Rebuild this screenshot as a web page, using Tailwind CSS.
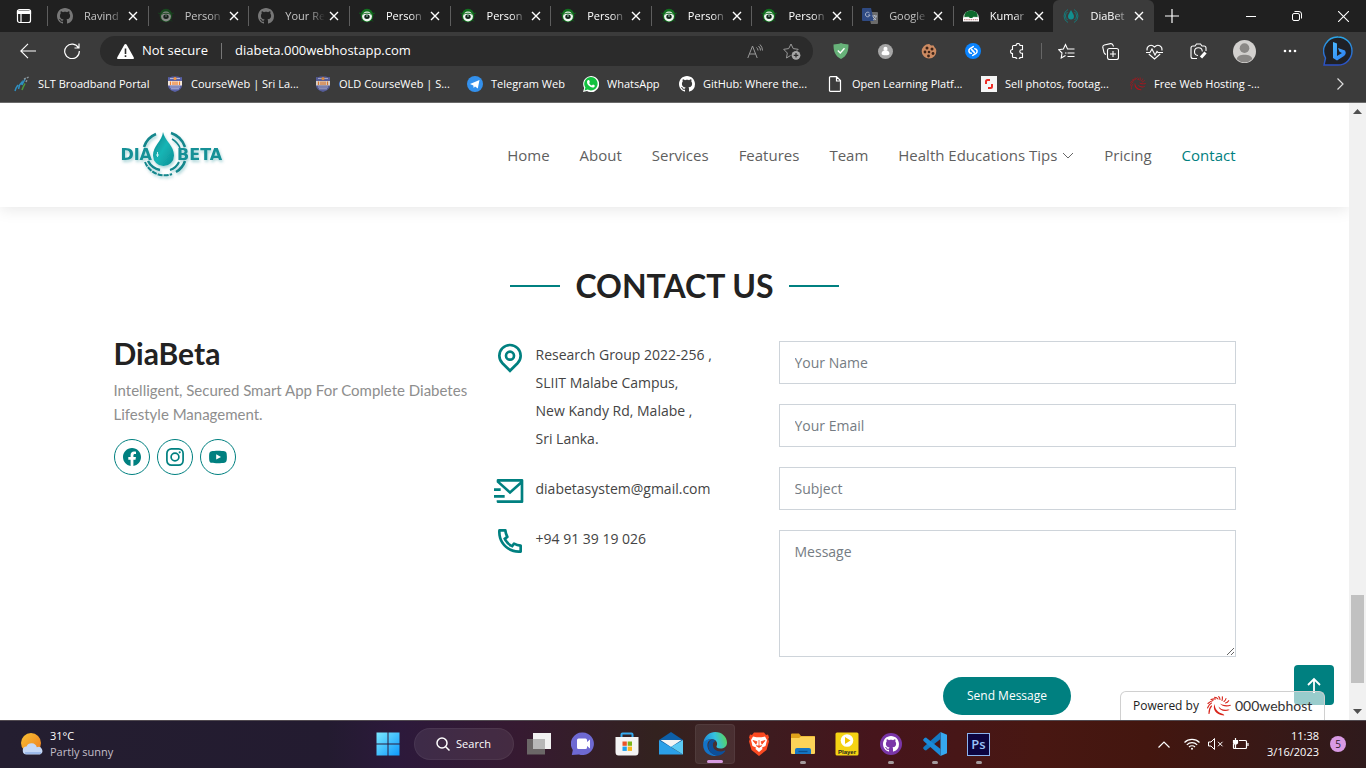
<!DOCTYPE html>
<html lang="en">
<head>
<meta charset="utf-8">
<meta name="viewport" content="width=device-width, initial-scale=1">
<title>DiaBeta</title>
<script src="https://cdn.jsdelivr.net/npm/@tailwindcss/browser@4"></script>
</head>
<body class="flex h-screen flex-col overflow-hidden bg-white font-['Open_Sans',sans-serif]">

<svg class="hidden" aria-hidden="true">
  <symbol id="github" viewBox="0 0 16 16"><path fill="currentColor" d="M8 0C3.58 0 0 3.58 0 8c0 3.54 2.29 6.53 5.47 7.59.4.07.55-.17.55-.38 0-.19-.01-.82-.01-1.49-2.01.37-2.53-.49-2.69-.94-.09-.23-.48-.94-.82-1.13-.28-.15-.68-.52-.01-.53.63-.01 1.08.58 1.23.82.72 1.21 1.87.87 2.33.66.07-.52.28-.87.51-1.07-1.78-.2-3.64-.89-3.64-3.95 0-.87.31-1.59.82-2.15-.08-.2-.36-1.02.08-2.12 0 0 .67-.21 2.2.82.64-.18 1.32-.27 2-.27s1.36.09 2 .27c1.53-1.04 2.2-.82 2.2-.82.44 1.1.16 1.92.08 2.12.51.56.82 1.27.82 2.15 0 3.07-1.87 3.75-3.65 3.95.29.25.54.73.54 1.48 0 1.07-.01 1.93-.01 2.2 0 .21.15.46.55.38A8.01 8.01 0 0 0 16 8c0-4.42-3.58-8-8-8"/></symbol>
  <symbol id="close" viewBox="0 0 10 10"><path d="M1 1l8 8M9 1L1 9" stroke="currentColor" stroke-width="1.400" fill="none"/></symbol>
  <symbol id="person" viewBox="0 0 16 16"><ellipse cx="8" cy="7.500" rx="6.300" ry="6.800" fill="#12701f"/><path d="M0 5l3 1M16 5l-3 1M2 13.500l2-2M14 13.500l-2-2" stroke="#0f5a1a"/><circle cx="8" cy="8.500" r="4.900" fill="#f2f7f2"/><ellipse cx="8" cy="8.700" rx="2.700" ry="2.200" fill="#12251a"/><path d="M3.500 6.300C6 4.800 10 4.800 12.500 6.300" stroke="#12701f" fill="none"/><circle cx="8" cy="8" r=".700" fill="#cfe"/></symbol>
  <symbol id="sliit" viewBox="0 0 14 16"><path d="M0 1c2 .5 3 0 4-.6h6C11 1 12 1.500 14 1v8c0 4-4 6-7 7-3-1-7-3-7-7z" fill="#5a62a8"/><path d="M2 2.500h10M2 11h10M3 12.800h8" stroke="#c9cbe6" stroke-width=".8"/><circle cx="7" cy="2.600" r="1.600" fill="#f0923c"/><path d="M0 5h14v4.500H0z" fill="#f4e9de"/><path d="M2.500 5.500v3.500M5 5.500v3.500M7 5.500v3.500M9 5.500v3.500M11.500 5.500v3.500" stroke="#ee7d2b" stroke-width="1.200"/></symbol>
  <symbol id="swirl" viewBox="0 0 24 20"><g fill="currentColor"><path d="M7.500 8C5.500 13 8 18.500 17 19.500 17.500 19 17 18.500 16 18 10.500 16.500 8 13 7.500 8z"/><path d="M11.500 10.500c1 4 6 6 11 3.500-.2-.5-1-.600-2-.400-4 .800-7-.600-9-3.100z"/><path d="M13 7.500c2 3 7 4 11 2 0-.6-.5-.7-1.500-.600-4 .700-7-.100-9.500-1.400z"/></g><g fill="none" stroke="currentColor" stroke-width="1.100" stroke-linecap="round"><path d="M4.500 10C2.500 12 2 14 2 17.500M4.500 7C2.500 8 1.500 9.500.500 12M6 4.500C4 5 2.500 6 1 7.500M8.500 3C7 2.500 5.500 3 4 3.500M11 3C10 1.500 9 1.200 7.500 1.200M13 3.500c0-1.200-.5-2-1.300-2.800M15 4.500c.5-1.500.5-2.500.3-3.800M17 5.500c1.200-1 1.800-2 2-3M18.500 7c1.500-.3 2.500-1.200 3.200-2.300"/></g></symbol>
</svg>

<!-- Tab strip -->
<div class="flex h-8 shrink-0 bg-[#202020] text-[11px] text-white">
  <button aria-label="Tab actions" class="flex w-[47px] items-center justify-center">
    <svg class="size-4" viewBox="0 0 16 16" fill="none" stroke="#fff" stroke-width="1.200"><rect x="1.500" y="1.500" width="13" height="13" rx="2"/><path d="M1.500 3h13v2.500h-13z" fill="#fff"/><path d="M5 5v9.500"/></svg>
  </button>
  <div class="flex min-w-0 flex-1" id="tabs">
    <div class="flex min-w-0 flex-1 items-center pl-[10px] relative"><i class="absolute left-0 h-5 w-px bg-[#5e5e5e]"></i><svg class="size-4 shrink-0 text-[#777]"><use href="#github"/></svg><span class="ml-[11px] w-10 whitespace-nowrap text-[#c5c5c5] [mask-image:linear-gradient(to_right,black_60%,transparent)]">Ravind</span><button aria-label="Close tab" class="ml-1"><svg class="size-[10px]"><use href="#close"/></svg></button></div>
    <div class="flex min-w-0 flex-1 items-center pl-[10px] relative"><i class="absolute left-0 h-5 w-px bg-[#5e5e5e]"></i><svg class="size-4 shrink-0 opacity-50"><use href="#person"/></svg><span class="ml-[11px] w-10 whitespace-nowrap text-[#c5c5c5] [mask-image:linear-gradient(to_right,black_60%,transparent)]">Person</span><button aria-label="Close tab" class="ml-1"><svg class="size-[10px]"><use href="#close"/></svg></button></div>
    <div class="flex min-w-0 flex-1 items-center pl-[10px] relative"><i class="absolute left-0 h-5 w-px bg-[#5e5e5e]"></i><svg class="size-4 shrink-0 text-[#777]"><use href="#github"/></svg><span class="ml-[11px] w-10 whitespace-nowrap text-[#c5c5c5] [mask-image:linear-gradient(to_right,black_60%,transparent)]">Your Re</span><button aria-label="Close tab" class="ml-1"><svg class="size-[10px]"><use href="#close"/></svg></button></div>
    <div class="flex min-w-0 flex-1 items-center pl-[10px] relative"><i class="absolute left-0 h-5 w-px bg-[#5e5e5e]"></i><svg class="size-4 shrink-0"><use href="#person"/></svg><span class="ml-[11px] w-10 whitespace-nowrap [mask-image:linear-gradient(to_right,black_60%,transparent)]">Person</span><button aria-label="Close tab" class="ml-1"><svg class="size-[10px]"><use href="#close"/></svg></button></div>
    <div class="flex min-w-0 flex-1 items-center pl-[10px] relative"><i class="absolute left-0 h-5 w-px bg-[#5e5e5e]"></i><svg class="size-4 shrink-0"><use href="#person"/></svg><span class="ml-[11px] w-10 whitespace-nowrap [mask-image:linear-gradient(to_right,black_60%,transparent)]">Person</span><button aria-label="Close tab" class="ml-1"><svg class="size-[10px]"><use href="#close"/></svg></button></div>
    <div class="flex min-w-0 flex-1 items-center pl-[10px] relative"><i class="absolute left-0 h-5 w-px bg-[#5e5e5e]"></i><svg class="size-4 shrink-0"><use href="#person"/></svg><span class="ml-[11px] w-10 whitespace-nowrap [mask-image:linear-gradient(to_right,black_60%,transparent)]">Person</span><button aria-label="Close tab" class="ml-1"><svg class="size-[10px]"><use href="#close"/></svg></button></div>
    <div class="flex min-w-0 flex-1 items-center pl-[10px] relative"><i class="absolute left-0 h-5 w-px bg-[#5e5e5e]"></i><svg class="size-4 shrink-0"><use href="#person"/></svg><span class="ml-[11px] w-10 whitespace-nowrap [mask-image:linear-gradient(to_right,black_60%,transparent)]">Person</span><button aria-label="Close tab" class="ml-1"><svg class="size-[10px]"><use href="#close"/></svg></button></div>
    <div class="flex min-w-0 flex-1 items-center pl-[10px] relative"><i class="absolute left-0 h-5 w-px bg-[#5e5e5e]"></i><svg class="size-4 shrink-0"><use href="#person"/></svg><span class="ml-[11px] w-10 whitespace-nowrap [mask-image:linear-gradient(to_right,black_60%,transparent)]">Person</span><button aria-label="Close tab" class="ml-1"><svg class="size-[10px]"><use href="#close"/></svg></button></div>
    <div class="flex min-w-0 flex-1 items-center pl-[10px] relative"><i class="absolute left-0 h-5 w-px bg-[#5e5e5e]"></i><svg class="size-4 shrink-0" viewBox="0 0 16 16"><path d="M6 4h9q1 0 1 1v10q0 1-1 1H9z" fill="#6b6b6b"/><path d="M1 0h8l3 13H1q-1 0-1-1V1q0-1 1-1z" fill="#2f4a82"/><path d="M7.500 5A2.300 2.300 0 1 0 8 7H6M10 8h5M12.500 7v1M11 12c2-1 3-2 3-4M11 9l3 3" stroke="#b5bed0" fill="none" stroke-width=".9"/></svg><span class="ml-[11px] w-10 whitespace-nowrap text-[#c5c5c5] [mask-image:linear-gradient(to_right,black_60%,transparent)]">Google</span><button aria-label="Close tab" class="ml-1"><svg class="size-[10px]"><use href="#close"/></svg></button></div>
    <div class="flex min-w-0 flex-1 items-center pl-[10px] relative"><i class="absolute left-0 h-5 w-px bg-[#5e5e5e]"></i><svg class="size-4 shrink-0" viewBox="0 0 16 16"><path d="M0 10a8 7.500 0 0 1 16 0z" fill="#e9f0e9"/><path d="M1.500 9C1 6 3 3.500 5 3.200 6 2.300 10 2.300 11 3.200 13.500 3.500 15 6 14.500 9l-4-.3-1.500 1.300h-2L5.500 8.700z" fill="#0d6a2c"/><path d="M0 10h16v3.500H0z" fill="#fff"/><path d="M1 11.700h14" stroke="#b77" stroke-dasharray="1.500 .7"/></svg><span class="ml-[11px] w-10 whitespace-nowrap [mask-image:linear-gradient(to_right,black_60%,transparent)]">Kumar</span><button aria-label="Close tab" class="ml-1"><svg class="size-[10px]"><use href="#close"/></svg></button></div>
    <div class="flex min-w-0 flex-1 items-center rounded-t-md bg-[#3b3b3b] pl-[10px]"><svg class="size-4 shrink-0" viewBox="0 0 16 16" fill="none" stroke="#147b7b"><path d="M8 2c1.500 3 3 4.500 3 6.500a3 3 0 0 1-6 0C5 6.500 6.500 5 8 2z" fill="#128f8f" stroke="none"/><path d="M5 1.500a7.300 7.300 0 0 0 0 13M11 1.500a7.300 7.300 0 0 1 0 13M4.500 4a5 5 0 0 0 0 8M11.500 4a5 5 0 0 1 0 8"/></svg><span class="ml-[11px] w-10 whitespace-nowrap [mask-image:linear-gradient(to_right,black_60%,transparent)]">DiaBet</span><button aria-label="Close tab" class="ml-1"><svg class="size-[10px]"><use href="#close"/></svg></button></div>
  </div>
  <div class="flex w-[212px] shrink-0 items-center">
    <button aria-label="New tab" class="flex w-9 justify-center"><svg class="size-[14px]" viewBox="0 0 14 14" stroke="#fff" stroke-width="1.200"><path d="M7 0v14M0 7h14"/></svg></button>
    <div class="ml-auto flex">
      <button aria-label="Minimize" class="flex w-[46px] justify-center"><svg class="size-[10px]" viewBox="0 0 10 10" stroke="#fff"><path d="M0 5.500h10"/></svg></button>
      <button aria-label="Restore" class="flex w-[46px] justify-center"><svg class="size-[10px]" viewBox="0 0 10 10" stroke="#fff" fill="none"><rect x=".5" y="2.500" width="7" height="7" rx="1.500"/><path d="M2.500.5H7A2.500 2.500 0 0 1 9.500 3v4.500"/></svg></button>
      <button aria-label="Close window" class="flex w-[46px] justify-center"><svg class="size-[11px]" viewBox="0 0 10 10" stroke="#fff"><path d="M0 0l10 10M10 0L0 10"/></svg></button>
    </div>
  </div>
</div>

<!-- Toolbar -->
<div class="flex h-[38px] shrink-0 items-center bg-[#3b3b3b] pr-0.5 pl-1.5 text-white">
  <button aria-label="Back" class="flex w-11 justify-center"><svg class="size-4" viewBox="0 0 16 16" fill="none" stroke="#fff" stroke-width="1.100"><path d="M16 8H.800M8 .800L.800 8 8 15.200"/></svg></button>
  <button aria-label="Refresh" class="mr-1.5 flex w-11 justify-center"><svg class="size-4" viewBox="0 0 16 16" fill="none" stroke="#fff" stroke-width="1.200"><path d="M14.500 5A7.300 7.300 0 1 0 15.300 8M15 .500V5h-4.500"/></svg></button>
  <div class="flex h-[30px] min-w-0 flex-1 items-center rounded-full bg-[#2b2b2b] pr-3 pl-[17px] text-[13px]">
    <svg class="h-[15px] w-[17px] shrink-0" viewBox="0 0 17 15"><path d="M8.500 0q.8 0 1.200.8l7 12.500Q17.300 15 15.800 15H1.200Q-.3 15 .3 13.300L7.300.8Q7.700 0 8.500 0z" fill="#fff"/><path d="M8.500 4.500V10M8.500 11.300v1.800" stroke="#2b2b2b" stroke-width="1.600"/></svg>
    <span class="ml-2 w-[79px] whitespace-nowrap">Not secure</span>
    <i class="h-4 w-px bg-[#777]"></i>
    <input aria-label="Address" value="diabeta.000webhostapp.com" class="ml-[13px] min-w-0 flex-1 bg-transparent outline-none">
    <button aria-label="Read aloud" class="mr-5"><svg class="h-[15px] w-4" viewBox="0 0 16 15" fill="none" stroke="#9a9a9a"><path d="M.800 14L5.500 2 10.200 14M2.500 10h6M9.500 3.500a4 4 0 0 1 1.500 3M11.500 2a6 6 0 0 1 2 4.500M13 .500a9 9 0 0 1 2.500 6"/></svg></button>
    <button aria-label="Add to favorites"><svg class="h-[17px] w-[18px]" viewBox="0 0 18 17" fill="none" stroke="#9a9a9a"><path d="M8 1l2.200 4.600 5 .7-1.500 1.500M7.500 12.500L3.500 15l.8-5L.7 6.300l5-.7L8 1"/><circle cx="13" cy="12.300" r="4.400" fill="#a5a5a5" stroke="none"/><path d="M13 10v4.600M10.700 12.300h4.600" stroke="#2b2b2b" stroke-width="1.200"/></svg></button>
  </div>
  <button aria-label="Ad blocker" class="ml-1.5 flex w-11 justify-center"><svg class="size-4" viewBox="0 0 16 16"><path d="M8 0c2.500 1 5 1.300 7.500 1.500C15.600 8 14 13 8 16 2 13 .4 8 .5 1.500 3 1.300 5.500 1 8 0z" fill="#67b279"/><path d="M4.800 7.500l2.500 2.500 4.200-4.700" fill="none" stroke="#fff" stroke-width="1.400"/></svg></button>
  <button aria-label="Extension" class="flex w-11 justify-center"><svg class="size-[15px]" viewBox="0 0 16 16"><circle cx="8" cy="8" r="8" fill="#a6a6a6"/><circle cx="8" cy="5.200" r="2.200" fill="#fff"/><path d="M6.500 7h3c2 .500 2.700 2 2.700 3.500S10 12 8 12s-4.200 0-4.200-1.500S4.500 7.500 6.500 7z" fill="#fff"/></svg></button>
  <button aria-label="Cookies" class="flex w-11 justify-center"><svg class="size-4" viewBox="0 0 16 16"><path d="M8 1c1 0 1 1.500 2.500 1.500C11.500 2.500 12 1.500 13 3c0 1.500 2.500 2 2.300 5A7.300 7.300 0 1 1 8 1z" fill="#cd8b62"/><g fill="#3d2418"><circle cx="6" cy="5" r="1.500"/><circle cx="11" cy="6" r="1.500"/><circle cx="4" cy="9" r="1.400"/><circle cx="8" cy="9" r="1.300"/><circle cx="12" cy="10.500" r="1.400"/><circle cx="7.500" cy="13" r="1.400"/></g></svg></button>
  <button aria-label="Shazam" class="flex w-11 justify-center"><svg class="size-4" viewBox="0 0 16 16"><circle cx="8" cy="8" r="8" fill="#0a84ff"/><path d="M6.300 10.300C3.800 10 3 7.200 5 5.700L8.300 3.600M7 7.300l2.300 2.200M9.700 5.700c2.500.3 3.300 3.100 1.300 4.600l-3.300 2.100M9 8.700L6.700 6.500" fill="none" stroke="#fff" stroke-width="1.500" stroke-linecap="round"/></svg></button>
  <button aria-label="Extensions" class="flex w-11 justify-center"><svg class="size-4" viewBox="0 0 16 16" fill="none" stroke="#fff" stroke-width="1.100"><path d="M5 2.500h2a2 2 0 0 1 4 0h2.500v4.300h-1a1.700 1.700 0 0 0 0 3.400h1v4.300H11a2 2 0 0 1-4 0H4.500q-1 0-1-1V10.500a2 2 0 0 1 0-4V3.500q0-1 1-1z"/></svg></button>
  <i class="mx-0.5 h-4 w-px bg-[#666]"></i>
  <button aria-label="Favorites" class="flex w-11 justify-center"><svg class="size-[17px]" viewBox="0 0 17 17" fill="none" stroke="#fff" stroke-width="1.100"><path d="M11 6H9.500L7.500 1.500 5.400 6 .700 6.600 4 10l-.8 5L7.500 12.500M8.500 10H7M10 6h6.500M9.500 10h7M9.500 13.500h7"/></svg></button>
  <button aria-label="Collections" class="flex w-11 justify-center"><svg class="size-[17px]" viewBox="0 0 17 17" fill="none" stroke="#fff" stroke-width="1.100"><rect x="5.500" y="5.500" width="11" height="11" rx="2"/><path d="M11 8v6M8 11h6M4 11.500Q2.500 11 2 9.500L.800 4.500Q.500 2.500 2.300 2L8.500.600q1.800-.2 2.300 1.200L11.500 3.500"/></svg></button>
  <button aria-label="Performance" class="flex w-11 justify-center"><svg class="size-[17px]" viewBox="0 0 17 17" fill="none" stroke="#fff" stroke-width="1.100"><path d="M1 7.500C.5 3 5 .500 8.500 4 12 .500 16.500 3 16 7.500M2.800 11l5.700 5 5.700-5M0 9.500h4l2-3.500 3 6 2-3.500 1 1h5"/></svg></button>
  <button aria-label="Screenshot" class="flex w-11 justify-center"><svg class="size-[17px]" viewBox="0 0 17 17" fill="none" stroke="#fff" stroke-width="1.100"><path d="M7 15.500H3q-2 0-2-2V5q0-2 2-2h2l1.500-2h4L12 3h2q2 0 2 2v3M8 12.500A3.900 3.900 0 1 1 12.300 8.500"/><path d="M15.500 9.500l-4.500 5" stroke-width="3"/></svg></button>
  <button aria-label="Profile" class="flex w-12 justify-center"><svg class="size-[23px]" viewBox="0 0 24 24"><circle cx="12" cy="12" r="12" fill="#d2d0ce"/><circle cx="12" cy="8.500" r="5" fill="#8a8886"/><path d="M4 20c0-6 16-6 16 0a11.500 11.500 0 0 1-16 0z" fill="#8a8886"/></svg></button>
  <button aria-label="Settings and more" class="flex w-11 justify-center"><svg class="h-1 w-[14px]" viewBox="0 0 14 4" fill="#fff"><circle cx="2" cy="2" r="1.300"/><circle cx="7" cy="2" r="1.300"/><circle cx="12" cy="2" r="1.300"/></svg></button>
  <button aria-label="Bing" class="flex w-[52px] justify-center"><svg class="size-[30px]" viewBox="0 0 30 30"><defs><linearGradient id="bg" x1="0" y1="0" x2="0" y2="1"><stop stop-color="#2aa6e8"/><stop offset="1" stop-color="#2b4fc4"/></linearGradient><linearGradient id="bb" x1="0" y1="0" x2="1" y2="1"><stop stop-color="#4ab8ff"/><stop offset="1" stop-color="#2a7cf0"/></linearGradient></defs><path d="M15 1a14 14 0 1 1 0 28H1l1.500-7A14 14 0 0 1 15 1z" fill="#1f2126" stroke="url(#bg)" stroke-width="1.400"/><path d="M10 6l4 1.500V20l5-3-2.500-1.200L15 12l7 2.500c1.500 2.500.5 4.500-1 5.500l-7 4.500-4-2.500z" fill="url(#bb)"/></svg></button>
</div>

<!-- Bookmarks -->
<nav aria-label="Bookmarks" class="flex shrink-0 border-b border-[#6a6a6a] bg-[#3b3b3b] pb-1 pl-[14px] text-[11px] text-white">
  <a href="#" class="flex h-7 w-[153px] items-center gap-2 whitespace-nowrap"><svg class="size-4 shrink-0" viewBox="0 0 16 16" fill="none" stroke-width="1.500"><path d="M1 15l1-3 2-3M4.500 13l1-4 2.500-3v3L11 3" stroke="#2f8fc0"/><path d="M8 14l1-2.500 2-4" stroke="#4d9a3e"/><path d="M10 3l5-2M12 6l1-2" stroke="#8a949a" stroke-dasharray="2 1"/></svg>SLT Broadband Portal</a>
  <a href="#" class="flex h-7 w-[148px] items-center gap-2 whitespace-nowrap"><svg class="h-4 w-4 shrink-0"><use href="#sliit"/></svg>CourseWeb | Sri La...</a>
  <a href="#" class="flex h-7 w-[152px] items-center gap-2 whitespace-nowrap"><svg class="h-4 w-4 shrink-0 opacity-85"><use href="#sliit"/></svg>OLD CourseWeb | S...</a>
  <a href="#" class="flex h-7 w-[116px] items-center gap-2 whitespace-nowrap"><svg class="size-4 shrink-0" viewBox="0 0 16 16"><circle cx="8" cy="8" r="8" fill="#3390ec"/><path d="M3 8l9.500-4-1.700 8.500-2.800-2-1.300 1.500-.4-2.500z" fill="#fff"/></svg>Telegram Web</a>
  <a href="#" class="flex h-7 w-[96px] items-center gap-2 whitespace-nowrap"><svg class="size-4 shrink-0" viewBox="0 0 16 16"><path d="M0 16l1.200-4A8 8 0 1 1 4 14.900z" fill="#fff"/><path d="M1.600 14.400l.8-2.800a6.700 6.700 0 1 1 2.200 2z" fill="#12c13f"/><path d="M5.300 4c1-.5 1.500 1.500 1.500 2s-.8.8-.6 1.200c.6 1.200 1.500 2 2.600 2.400.5 0 .8-1 1.200-1 .6.200 2 .8 1.800 1.300-.6 2-2.600 1.900-4.500.8C5.500 9.600 4 8 4 6c0-1 .6-1.700 1.300-2z" fill="#fff"/></svg>WhatsApp</a>
  <a href="#" class="flex h-7 w-[149px] items-center gap-2 whitespace-nowrap"><svg class="size-4 shrink-0 text-white"><use href="#github"/></svg>GitHub: Where the...</a>
  <a href="#" class="flex h-7 w-[153px] items-center gap-2 whitespace-nowrap"><svg class="size-4 shrink-0" viewBox="0 0 16 16" fill="none" stroke="#fff" stroke-width="1.200"><path d="M2.500.600h6l4 4v9.800q0 1-1 1h-9q-1 0-1-1V1.600q0-1 1-1zM8.500 .600V5h4"/></svg>Open Learning Platf...</a>
  <a href="#" class="flex h-7 w-[149px] items-center gap-2 whitespace-nowrap"><svg class="size-4 shrink-0" viewBox="0 0 16 16"><path d="M0 0h16v16H0z" fill="#f5f5f5"/><path d="M9 4H6.500Q5 4 5 5.500V8M7 12h2.500Q11 12 11 10.500V8" fill="none" stroke="#ee2b24" stroke-width="2"/></svg>Sell photos, footag...</a>
  <a href="#" class="flex h-7 items-center gap-2 whitespace-nowrap"><svg class="size-4 shrink-0 text-[#b3131b]"><use href="#swirl"/></svg>Free Web Hosting -...</a>
  <button aria-label="More bookmarks" class="mr-[22px] ml-auto flex items-center"><svg class="h-3 w-[7px]" viewBox="0 0 7 12" fill="none" stroke="#ddd" stroke-width="1.200"><path d="M.500.500L6 6 .500 11.500"/></svg></button>
</nav>

<!-- Web page -->
<div class="flex min-h-0 flex-1">
  <div class="relative min-w-0 flex-1 overflow-hidden bg-white">
    <header class="h-[104px] bg-white shadow-[0_2px_15px_rgba(0,0,0,0.1)]">
      <div class="mx-auto flex h-full max-w-[1122px] items-center justify-between">
        <a href="#" aria-label="DiaBeta home">
          <svg class="h-[54px] w-[124px]" viewBox="0 0 124 54">
            <defs><linearGradient id="drop" x1="0" y1="0" x2="1" y2="1"><stop stop-color="#0b7f85"/><stop offset=".5" stop-color="#15b5b5"/><stop offset="1" stop-color="#0d8f95"/></linearGradient><filter id="soft" x="-20%" y="-20%" width="140%" height="150%"><feDropShadow dx="1" dy="2" stdDeviation="1.500" flood-color="#0b8088" flood-opacity=".35"/></filter></defs>
            <g filter="url(#soft)">
              <g fill="none" stroke="#12868c" stroke-width="2.500"><path d="M30 19A21 21 0 0 1 42 6"/><path d="M57 5A22 22 0 0 1 71 19"/><path d="M58 11a18 18 0 0 1 8 9" stroke-width="1.500"/><path d="M31 34a21 21 0 0 0 27 12" stroke-width="2" stroke-dasharray="5 1"/><path d="M34 33a18 18 0 0 0 12 9"/><path d="M62 44a20 20 0 0 0 9-11"/><path d="M56 42a15 15 0 0 0 9-8" stroke-width="2"/></g>
              <path d="M49 4c2 9 11 14 11 23.500a10.500 10.500 0 0 1-21 0C39 18 48 13 49 4z" fill="url(#drop)"/>
              <path d="M42 27l3 0M43.500 24v5" stroke="#c4f1f1" stroke-width="1"/>
              <g font-family="'DejaVu Sans',sans-serif" font-weight="bold" font-size="16" fill="#129096"><text x="38" y="32" text-anchor="end">DIA</text><text x="63" y="32">BETA</text></g>
            </g>
          </svg>
        </a>
        <nav class="flex items-center gap-[30px] text-[15px] text-[#5f5f5f]">
          <a href="#">Home</a><a href="#">About</a><a href="#">Services</a><a href="#">Features</a><a href="#">Team</a>
          <a href="#" class="flex items-center gap-[5px]">Health Educations Tips<svg class="h-[7px] w-3" viewBox="0 0 12 7" fill="none" stroke="#666"><path d="M1 1l5 5 5-5"/></svg></a>
          <a href="#">Pricing</a><a href="#" class="text-[#008080]">Contact</a>
        </nav>
      </div>
    </header>

    <main class="mx-auto max-w-[1122px] pt-[60px]">
      <h2 class="mb-9 flex items-center justify-center gap-[15px] font-[Lato,sans-serif] text-[32px] leading-[38px] font-bold text-[#222] before:h-0.5 before:w-[50px] before:bg-[#008080] after:h-0.5 after:w-[50px] after:bg-[#008080]">CONTACT US</h2>
      <div class="grid grid-cols-[380fr_285fr_457fr]">
        <section>
          <h3 class="font-[Lato,sans-serif] text-[30px] leading-6 font-bold text-[#222]">DiaBeta</h3>
          <p class="mt-[13px] font-[Lato,sans-serif] text-[15px] leading-6 text-[#8e8e8e]">Intelligent, Secured Smart App For Complete Diabetes<br>Lifestyle Management.</p>
          <div class="mt-[13px] flex gap-[7px] text-[#008080]">
            <a href="#" aria-label="Facebook" class="flex size-9 items-center justify-center rounded-full border border-[#008080]"><svg class="size-[18px]" viewBox="0 0 16 16" fill="currentColor"><path d="M16 8.049c0-4.446-3.582-8.050-8-8.050C3.580 0-.002 3.603-.002 8.050c0 4.017 2.926 7.347 6.750 7.951v-5.625h-2.030V8.050H6.750V6.275c0-2.017 1.195-3.131 3.022-3.131.876 0 1.791.157 1.791.157v1.980h-1.009c-.993 0-1.303.621-1.303 1.258v1.510h2.218l-.354 2.326H9.250V16c3.824-.604 6.750-3.934 6.750-7.951"/></svg></a>
            <a href="#" aria-label="Instagram" class="flex size-9 items-center justify-center rounded-full border border-[#008080]"><svg class="size-[18px]" viewBox="0 0 18 18" fill="none" stroke="currentColor" stroke-width="1.700"><rect x=".900" y=".900" width="16.200" height="16.200" rx="4.500"/><circle cx="9" cy="9" r="3.900"/><circle cx="13.700" cy="4.300" r="1.100" fill="currentColor" stroke="none"/></svg></a>
            <a href="#" aria-label="YouTube" class="flex size-9 items-center justify-center rounded-full border border-[#008080]"><svg class="size-[18px]" viewBox="0 0 18 18"><path d="M2.500 3.200C5 2.500 13 2.500 15.500 3.200c1.800.5 2.400 1.300 2.400 5.600s-.6 5.600-2.400 6c-2.500.6-10.500.6-13 0C.7 14.400.1 13.300.1 8.900s.6-5.200 2.400-5.700z" fill="currentColor"/><path d="M7.200 6.200v5.400L12 8.900z" fill="#fff"/></svg></a>
          </div>
        </section>

        <address class="flex flex-col gap-[22px] text-sm leading-7 text-[#444] not-italic">
          <div class="flex h-28 gap-[10px]"><svg class="size-8 shrink-0 text-[#008080]" viewBox="0 0 24 24" fill="currentColor"><path d="M12 20.900l4.950-4.950a7 7 0 1 0-9.900 0L12 20.900zm0 2.828l-6.364-6.364a9 9 0 1 1 12.728 0L12 23.728zM12 13a2 2 0 1 0 0-4 2 2 0 0 0 0 4zm0 2a4 4 0 1 1 0-8 4 4 0 0 1 0 8z"/></svg><p>Research Group 2022-256 ,<br>SLIIT Malabe Campus,<br>New Kandy Rd, Malabe ,<br>Sri Lanka.</p></div>
          <div class="flex h-7 gap-[10px]"><svg class="size-8 shrink-0 text-[#008080]" viewBox="0 0 24 24" fill="currentColor"><path d="M22 20.007a1 1 0 0 1-.992.993H2.992A.993.993 0 0 1 2 20.007V19h18V7.300l-8 7.200-10-9V4a1 1 0 0 1 1-1h18a1 1 0 0 1 1 1v16.007zM4.434 5L12 11.810 19.566 5H4.434zM0 15h8v2H0v-2zm0-5h5v2H0v-2z"/></svg><p>diabetasystem@gmail.com</p></div>
          <div class="flex h-7 gap-[10px]"><svg class="size-8 shrink-0 text-[#008080]" viewBox="0 0 24 24" fill="currentColor"><path d="M9.366 10.682a10.556 10.556 0 0 0 3.952 3.952l.884-1.238a1 1 0 0 1 1.294-.296 11.422 11.422 0 0 0 4.583 1.364 1 1 0 0 1 .921.997v4.462a1 1 0 0 1-.898.995c-.53.055-1.064.082-1.602.082C9.940 21 3 14.060 3 5.500c0-.538.027-1.072.082-1.602A1 1 0 0 1 4.077 3h4.462a1 1 0 0 1 .997.921A11.422 11.422 0 0 0 10.900 8.504a1 1 0 0 1-.296 1.294l-1.238.884zm-2.522-.657l1.900-1.357A13.410 13.410 0 0 1 7.647 5H5.010c-.006.166-.009.333-.009.500C5 12.956 11.044 19 18.500 19c.167 0 .334-.003.500-.010v-2.637a13.410 13.410 0 0 1-3.668-1.097l-1.357 1.900a12.442 12.442 0 0 1-1.588-.750l-.058-.033a12.556 12.556 0 0 1-4.702-4.702l-.033-.058a12.442 12.442 0 0 1-.750-1.588z"/></svg><p>+94 91 39 19 026</p></div>
        </address>

        <form class="flex flex-col gap-5 text-sm text-[#444]">
          <input type="text" aria-label="Your Name" placeholder="Your Name" class="h-[43px] border border-[#ced4da] px-[15px] placeholder:text-[#757c83]">
          <input type="email" aria-label="Your Email" placeholder="Your Email" class="h-[43px] border border-[#ced4da] px-[15px] placeholder:text-[#757c83]">
          <input type="text" aria-label="Subject" placeholder="Subject" class="h-[43px] border border-[#ced4da] px-[15px] placeholder:text-[#757c83]">
          <textarea aria-label="Message" placeholder="Message" class="h-[127px] border border-[#ced4da] px-[15px] py-[11px] placeholder:text-[#757c83]"></textarea>
          <button type="button" class="h-[38px] w-32 self-center rounded-full bg-[#008080] text-xs text-white">Send Message</button>
        </form>
      </div>
    </main>

    <a href="#" aria-label="Back to top" class="absolute right-[15px] bottom-[15px] flex size-10 items-center justify-center rounded bg-[#008080]"><svg class="size-4" viewBox="0 0 16 16" fill="none" stroke="#fff" stroke-width="1.800"><path d="M8 16V2.500M2 8l6-6 6 6"/></svg></a>
    <a href="#" class="absolute right-6 bottom-0 flex h-[29px] w-[205px] items-center rounded-t-md border border-b-0 border-[#d0d0d0] bg-white/60 pl-3 text-xs whitespace-nowrap text-[#222]">Powered by<svg class="ml-2 h-5 w-6 text-[#d8261c]"><use href="#swirl"/></svg><span class="ml-1 font-[Lato,sans-serif] text-sm text-[#333]">000webhost</span></a>
  </div>
  <div class="relative flex w-[17px] shrink-0 flex-col items-center justify-between bg-[#f1f1f1] py-[6px]">
    <svg class="h-[5px] w-[9px]" viewBox="0 0 9 5"><path d="M0 5l4.500-5L9 5z" fill="#505050"/></svg>
    <div class="absolute bottom-[37px] h-[88px] w-[13px] bg-[#c1c1c1]"></div>
    <svg class="h-[5px] w-[9px]" viewBox="0 0 9 5"><path d="M0 0l4.500 5L9 0z" fill="#505050"/></svg>
  </div>
</div>

<!-- Taskbar -->
<footer class="flex h-12 shrink-0 items-center border-t border-[#514a50] bg-linear-[to_right,#241e30_0%,#231b30_24%,#2c193b_29%,#361a31_38%,#33221f_48%,#3b1d20_54%,#46151c_64%,#481712_76%,#43160f_84%,#2f1a1c_100%] pb-px text-[11px] text-white">
  <div class="flex flex-1 items-center pl-5">
    <svg class="size-6" viewBox="0 0 24 24"><defs><linearGradient id="sun" x1="0" y1="0" x2="1" y2="1"><stop stop-color="#f8c234"/><stop offset="1" stop-color="#ee7b1e"/></linearGradient></defs><circle cx="11" cy="11" r="10" fill="url(#sun)"/><path d="M7 22.500a4 4 0 0 1-.5-8 5.500 5.500 0 0 1 10.300.8A3.700 3.700 0 0 1 20 22.500z" fill="#c5d8f6"/><path d="M5 21h16" stroke="#8fb0e6" stroke-width="1.500"/></svg>
    <p class="ml-[6px] leading-4">31°C<br><span class="text-[#c3bec8]">Partly sunny</span></p>
  </div>
  <div class="flex h-full items-center">
    <button aria-label="Start" class="flex w-11 justify-center"><svg class="size-6" viewBox="0 0 24 24"><defs><linearGradient id="win" x1="0" y1="0" x2="1" y2="1"><stop stop-color="#7be9ff"/><stop offset="1" stop-color="#0d98fb"/></linearGradient></defs><path d="M.500.500H11.500v11H.500zM12.500.500h11v11h-11zM.500 12.500H11.500v11H.500zM12.500 12.500h11v11h-11z" fill="url(#win)"/></svg></button>
    <button class="mr-[3px] ml-1 flex h-8 w-[100px] items-center justify-center gap-[6px] rounded-full border border-white/5 bg-white/8 text-[11px]"><svg class="size-[14px]" viewBox="0 0 14 14" fill="none" stroke="#fff" stroke-width="1.500"><circle cx="6" cy="6" r="5"/><path d="M9.700 9.700L13.500 13.500"/></svg>Search</button>
    <button aria-label="Task view" class="flex w-11 justify-center"><svg class="size-6" viewBox="0 0 24 24"><path d="M6 1h18v16H6z" fill="#f1f1f1"/><path d="M0 7h18v15.500H0z" fill="#6b6767"/><path d="M6 7h12v10H6z" fill="#b7b7b7"/></svg></button>
    <button aria-label="Chat" class="flex w-11 justify-center"><svg class="size-6" viewBox="0 0 24 24"><path d="M12 .500a11.300 11.300 0 1 1-4 22L.800 23l1-5A11.300 11.300 0 0 1 12 .500z" fill="#6e69d2"/><path d="M6 8q0-1.500 1.500-1.500h7Q16 6.500 16 8v2l3-2.500v9L16 14v1.500q0 1.500-1.500 1.500h-7Q6 17 6 15.500z" fill="#fff"/></svg></button>
    <button aria-label="Store" class="flex w-11 justify-center"><svg class="size-6" viewBox="0 0 24 24"><path d="M6.500 6V2.500Q6.500 1.500 7.500 1.500h9q1 0 1 1V6" fill="none" stroke="#35a9ee" stroke-width="2"/><path d="M.500 5h23v15q0 3.500-3 3.500h-17q-3 0-3-3.500z" fill="#f4f4f4"/><path d="M7.500 9.500h4.300v4.300H7.500z" fill="#e8532a"/><path d="M12.700 9.500H17v4.300h-4.300z" fill="#7cb518"/><path d="M7.500 14.600h4.300v4.300H7.500z" fill="#1ea0ee"/><path d="M12.700 14.600H17v4.300h-4.300z" fill="#f8b61c"/></svg></button>
    <button aria-label="Mail" class="flex w-11 justify-center"><svg class="size-6" viewBox="0 0 24 24"><path d="M0 8L12 0l12 8-12 8z" fill="#0d5fa8"/><path d="M1.500 8h21L12 15z" fill="#f4f4f4"/><path d="M0 8l24 14.500H0z" fill="#2ba0e8"/><path d="M24 8v14.500L12 15z" fill="#5ccaf4"/></svg></button>
    <button aria-label="Edge" class="relative mx-0.5 flex h-10 w-10 items-center justify-center rounded border border-white/5 bg-white/8"><svg class="size-6" viewBox="0 0 24 24"><defs><linearGradient id="ed" x1="0" y1=".5" x2="1" y2=".3"><stop stop-color="#1f8ad8"/><stop offset=".5" stop-color="#34c1e0"/><stop offset="1" stop-color="#5ad45a"/></linearGradient></defs><path d="M.500 10C1.500 4 6.500 0 12.300 0 19 0 24 5 24 10.500c0 4-3 6-6.500 6-3 0-4.500-1-4-2.200C15 12 14 7.500 9 7.300 5 7.200 1.500 9 .500 12z" fill="url(#ed)"/><path d="M.200 12c.5-3 4-5 8.300-4.700-3 1-4.500 3.700-4 7C5 19 9 23 14.500 23.700 6 25.500-.500 19.500.200 12z" fill="#1373c8"/><path d="M9 7.300C6 9 5 11.500 5.300 15c.7 5 5.200 8.700 9.700 8.700 3.500-.7 6-2.700 7.200-4.500.3-.6-.1-.9-.7-.6C16.500 21 9 18.500 10 11.800c.2-1.500 1.500-2 2.500-2.700C11.500 7.800 10 7.500 9 7.300z" fill="#0c4f9a"/></svg><i class="absolute bottom-0 h-[3px] w-4 rounded-full bg-[#d79be0]"></i></button>
    <button aria-label="Brave" class="flex w-11 justify-center"><svg class="size-6" viewBox="0 0 24 24"><path d="M7 .500h10l2 2.500 2-.5 1 3-.8 1.500.8 2.500L19.500 18 12 24 4.500 18 2 9.500 2.800 7 2 5.500l1-3 2 .5z" fill="#fb4a22"/><path d="M6 4.500l3.500.8h5l3.500-.8 2 3.500-1.500 6L15 15.500l.5 1.500L12 20l-3.500-3 .5-1.500L5.500 14 4 8z" fill="#fff"/><path d="M6 8.500l4 1.200-1 2.500zM18 8.500l-4 1.200 1 2.500zM12 8v6M9 13.500l3 2 3-2" stroke="#fb4a22" fill="#fb4a22" stroke-width=".8"/></svg></button>
    <button aria-label="File Explorer" class="relative flex h-10 w-11 items-center justify-center"><svg class="size-6" viewBox="0 0 24 24"><path d="M0 2.500Q0 1.500 1 1.500h7l2 2.500h13q1 0 1 1V10H0z" fill="#e0a21a"/><path d="M0 6h8l2-1.500h14v16.500q0 1-1 1H1q-1 0-1-1z" fill="#fcd358"/><path d="M4 22v-4q0-2 2-2h12q2 0 2 2v4z" fill="#1576c4"/><path d="M7.500 19.500h9" stroke="#0d4f8c" stroke-width="1.300"/></svg><i class="absolute bottom-0 h-[3px] w-1.5 rounded-full bg-[#a39a9c]"></i></button>
    <button aria-label="Player" class="flex w-11 justify-center"><svg class="size-6" viewBox="0 0 24 24"><rect x=".500" y=".500" width="23" height="23" rx="1.500" fill="#f5d313"/><circle cx="12" cy="8.500" r="6.300" fill="#fff"/><path d="M10 5v7l5.500-3.500z" fill="#f0c400"/><text x="12" y="21.500" text-anchor="middle" font-family="'Liberation Sans',sans-serif" font-weight="bold" font-size="6" fill="#222">Player</text></svg></button>
    <button aria-label="GitHub Desktop" class="relative flex h-10 w-11 items-center justify-center"><span class="flex size-[22px] items-center justify-center rounded-full bg-[#7a36a8]"><svg class="size-4 text-white"><use href="#github"/></svg></span><i class="absolute bottom-0 h-[3px] w-1.5 rounded-full bg-[#a39a9c]"></i></button>
    <button aria-label="Visual Studio Code" class="relative flex h-10 w-11 items-center justify-center"><svg class="size-6" viewBox="0 0 24 24"><path d="M17.500 0L24 2.800v18.400L17.500 24z" fill="#36a8f0"/><path d="M17.500 0v7L3 18.500 1.500 18 .300 16.500v-1.200z" fill="#1479c2"/><path d="M17.500 24v-7L3 5.500 1.500 6 .300 7.500v1.200z" fill="#1b8ad8"/></svg><i class="absolute bottom-0 h-[3px] w-1.5 rounded-full bg-[#a39a9c]"></i></button>
    <button aria-label="Photoshop" class="relative flex h-10 w-11 items-center justify-center"><span class="flex size-[23px] items-center justify-center border border-[#8cb4ee] bg-[#0c0440] text-[13px] leading-none font-semibold text-[#9cc3f8]">Ps</span><i class="absolute bottom-0 h-[3px] w-1.5 rounded-full bg-[#a39a9c]"></i></button>
  </div>
  <div class="flex flex-1 items-center justify-end pr-5">
    <svg class="mr-[14px] h-[7px] w-3" viewBox="0 0 12 7" fill="none" stroke="#fff" stroke-width="1.200"><path d="M.500 6.500L6 1l5.500 5.500"/></svg>
    <svg class="mr-2 h-3 w-4" viewBox="0 0 16 12" fill="none" stroke="#fff" stroke-width="1.200"><path d="M.500 4.500a10.500 10.500 0 0 1 15 0M2.800 6.800a7.300 7.300 0 0 1 10.400 0M5 9a4.200 4.200 0 0 1 6 0"/><circle cx="8" cy="10.800" r="1" fill="#fff" stroke="none"/></svg>
    <svg class="mr-2 h-3 w-4" viewBox="0 0 16 12" fill="none" stroke="#fff"><path d="M.500 4v4H3l3.500 3.500V.500L3 4zM10 3.800l4.500 4.500M14.500 3.800L10 8.300"/></svg>
    <svg class="h-3 w-[17px]" viewBox="0 0 17 12" fill="none" stroke="#fff" stroke-width="1.200"><path d="M7 2.500h6.500q1 0 1 1v6q0 1-1 1h-11q-1 0-1-1V6M16 5v3"/><path d="M3.500 0v2.500M1.500 2.500h4V5q-2 2-4 0zM3.500 6v4.500" fill="#fff"/></svg>
    <p class="w-[70px] text-right leading-4">11:38<br>3/16/2023</p>
    <span class="ml-[11px] flex size-4 items-center justify-center rounded-full bg-[#d99ae4] text-[10px] text-[#2c1a2c]">5</span>
  </div>
</footer>
</body>
</html>
